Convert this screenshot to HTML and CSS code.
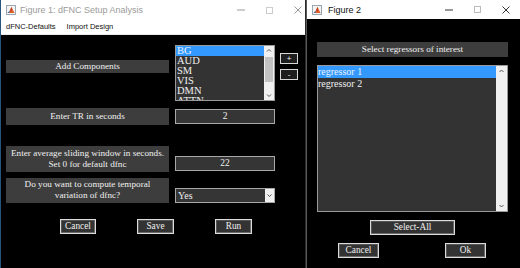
FILE: index.html
```html
<!DOCTYPE html>
<html>
<head>
<meta charset="utf-8">
<link rel="stylesheet" href="styles.css">
</head>
<body>
<div class="win fig1">
  <div class="titlebar">
    <svg class="appicon" width="10" height="10" viewBox="0 0 10 10"><rect x="0.5" y="0.5" width="9" height="9" fill="#f4f4f4" stroke="#9aa6b2"/><polygon points="1.5,8 4,5.5 5.5,1.8 7,5 8.6,8" fill="#e0602a"/><polygon points="4,5.5 5.5,1.8 5.8,6" fill="#b8321a"/><polygon points="1.5,8 4,5.5 3.4,8" fill="#3a78b8"/></svg>
    <span class="title inactive">Figure 1: dFNC Setup Analysis</span>
    <div class="controls c1">
      <svg width="8" height="8" viewBox="0 0 8 8"><line x1="0" y1="4" x2="8" y2="4" stroke="#999" stroke-width="1"/></svg>
      <svg width="7" height="7" viewBox="0 0 7 7"><rect x="0.5" y="0.5" width="6" height="6" fill="none" stroke="#ccc"/></svg>
      <svg width="8" height="8" viewBox="0 0 8 8"><path d="M0.5 0.5L7.5 7.5M7.5 0.5L0.5 7.5" stroke="#999" stroke-width="1"/></svg>
    </div>
  </div>
  <div class="menubar"><span class="menu">dFNC-Defaults</span><span class="menu">Import Design</span></div>
  <div class="content1">
    <div class="row r1">
      <div class="label l1">Add Components</div>
      <div class="listbox lb1">
        <div class="items">
          <div class="item sel">BG</div>
          <div class="item">AUD</div>
          <div class="item">SM</div>
          <div class="item">VIS</div>
          <div class="item">DMN</div>
          <div class="item">ATTN</div>
        </div>
        <div class="sbar sb1">
          <svg class="arr" width="10" height="9" viewBox="0 0 10 9"><polyline points="3,5.5 5,3.5 7,5.5" fill="none" stroke="#555" stroke-width="1"/></svg>
          <div class="track"><div class="thumb"></div></div>
          <svg class="arr" width="10" height="9" viewBox="0 0 10 9"><polyline points="3,3.5 5,5.5 7,3.5" fill="none" stroke="#555" stroke-width="1"/></svg>
        </div>
      </div>
      <div class="pm">
        <div class="smallbtn">+</div>
        <div class="smallbtn">-</div>
      </div>
    </div>
    <div class="row r2">
      <div class="label l2">Enter TR in seconds</div>
      <div class="field f2">2</div>
    </div>
    <div class="row r3">
      <div class="label l3">Enter average sliding window in seconds.<br>Set 0 for default dfnc</div>
      <div class="field f3">22</div>
    </div>
    <div class="row r4">
      <div class="label l4">Do you want to compute temporal<br>variation of dfnc?</div>
      <div class="popup">
        <span class="ptext">Yes</span>
        <span class="pbtn"><svg width="9" height="9" viewBox="0 0 9 9"><polyline points="2.5,3.5 4.5,5.5 6.5,3.5" fill="none" stroke="#555" stroke-width="1"/></svg></span>
      </div>
    </div>
    <div class="btnrow1">
      <div class="btn b-cancel1">Cancel</div>
      <div class="btn b-save">Save</div>
      <div class="btn b-run">Run</div>
    </div>
  </div>
</div>
<div class="win fig2">
  <div class="titlebar tb2">
    <svg class="appicon" width="10" height="10" viewBox="0 0 10 10"><rect x="0.5" y="0.5" width="9" height="9" fill="#f4f4f4" stroke="#9aa6b2"/><polygon points="1.5,8 4,5.5 5.5,1.8 7,5 8.6,8" fill="#e0602a"/><polygon points="4,5.5 5.5,1.8 5.8,6" fill="#b8321a"/><polygon points="1.5,8 4,5.5 3.4,8" fill="#3a78b8"/></svg>
    <span class="title">Figure 2</span>
    <div class="controls c2">
      <svg width="8" height="8" viewBox="0 0 8 8"><line x1="0" y1="4" x2="8" y2="4" stroke="#333" stroke-width="1"/></svg>
      <svg width="7" height="7" viewBox="0 0 7 7"><rect x="0.5" y="0.5" width="6" height="6" fill="none" stroke="#bbb"/></svg>
      <svg width="8" height="8" viewBox="0 0 8 8"><path d="M0.5 0.5L7.5 7.5M7.5 0.5L0.5 7.5" stroke="#333" stroke-width="1"/></svg>
    </div>
  </div>
  <div class="content2">
    <div class="label l5">Select regressors of interest</div>
    <div class="listbox lb2">
      <div class="items items2">
        <div class="item sel">regressor 1</div>
        <div class="item">regressor 2</div>
      </div>
      <div class="sbar sb2">
        <svg class="arr" width="11" height="10" viewBox="0 0 11 10"><polyline points="3.5,6 5.5,4 7.5,6" fill="none" stroke="#555" stroke-width="1"/></svg>
        <div class="track"></div>
        <svg class="arr" width="11" height="10" viewBox="0 0 11 10"><polyline points="3.5,4 5.5,6 7.5,4" fill="none" stroke="#555" stroke-width="1"/></svg>
      </div>
    </div>
    <div class="btn b-selall">Select-All</div>
    <div class="btnrow2">
      <div class="btn b-cancel2">Cancel</div>
      <div class="btn b-ok">Ok</div>
    </div>
  </div>
</div>
</body>
</html>
```

FILE: styles.css
```css
* { box-sizing: border-box; }
html, body { margin: 0; padding: 0; }
body {
  width: 520px;
  height: 268px;
  overflow: hidden;
  background: #000;
  display: flex;
  font-family: "Liberation Serif", "Times New Roman", serif;
  color: #eee;
}
.win { height: 268px; background: #000; display: flex; flex-direction: column; }
.fig1 { width: 306px; border-left: 1px solid #27557d; border-right: 1px solid #2a2a2a; }
.fig2 { width: 214px; border-left: 1px solid #5a5a5a; }

.titlebar {
  height: 20px;
  background: #fff;
  display: flex;
  align-items: center;
  font-family: "Liberation Sans", Arial, sans-serif;
  font-size: 9px;
  color: #111;
}
.tb2 { height: 19px; }
.appicon { margin-left: 5px; margin-right: 4px; flex: none; }
.tb2 .appicon { margin-left: 5px; margin-right: 6px; }
.title.inactive { color: #9a9a9a; }
.controls { margin-left: auto; display: flex; align-items: center; gap: 21px; }
.c1 { padding-right: 3px; }
.c2 { padding-right: 10px; }

.menubar {
  height: 15px;
  background: #fff;
  display: flex;
  align-items: center;
  padding-left: 5px;
  padding-bottom: 1px;
  font-family: "Liberation Sans", Arial, sans-serif;
  font-size: 7.5px;
  color: #111;
  gap: 11px;
  border-bottom: 1px solid #e8e8e8;
}

.content1 { padding-top: 10px; display: flex; flex-direction: column; }
.row { display: flex; align-items: flex-start; }
.label {
  background: #3d3d3d;
  color: #f0f0f0;
  font-size: 9.2px;
  text-align: center;
  display: flex;
  align-items: center;
  justify-content: center;
  line-height: 11px;
  white-space: nowrap;
}
.l1, .l2, .l3, .l4 { margin-left: 5px; width: 163px; }
.l1 { margin-top: 15px; height: 13px; }
.r2 { margin-top: 7px; }
.l2 { height: 17px; }
.r3 { margin-top: 21px; }
.l3 { height: 26px; }
.r4 { margin-top: 6px; }
.l4 { height: 25px; line-height: 10.5px; padding-bottom: 2px; }

.listbox { background: #333; border: 1px solid #9a9a9a; display: flex; overflow: hidden; }
.lb1 { margin-left: 6px; width: 100px; height: 56px; }
.items { flex: 1; overflow: hidden; }
.item { font-size: 10.5px; line-height: 10px; height: 10px; padding-left: 1px; color: #f0f0f0; white-space: nowrap; }
.item.sel { background: #3399ff; color: #eaf4ff; }
.items2 .item { font-size: 10px; line-height: 11.5px; height: 11.5px; padding-left: 0; }
.sbar { background: #f0f0f0; display: flex; flex-direction: column; flex: none; }
.sb1 { width: 10px; }
.sb2 { width: 11px; }
.arr { display: block; flex: none; }
.track { flex: 1; padding: 1px 1px; }
.thumb { height: 25px; background: #c2c2c2; margin-top: 1px; }

.pm { margin-left: 5px; margin-top: 8px; display: flex; flex-direction: column; gap: 5px; }
.smallbtn {
  width: 18px; height: 11px;
  background: #1e1e1e;
  border: 1px solid #d8d8d8;
  color: #fff;
  font-family: "Liberation Sans", Arial, sans-serif;
  font-size: 8px;
  line-height: 9px;
  text-align: center;
}

.field {
  margin-left: 6px;
  width: 100px;
  height: 15px;
  background: #353535;
  border: 1px solid #a8a8a8;
  color: #f0f0f0;
  font-size: 9.5px;
  line-height: 13px;
  text-align: center;
}
.f2 { margin-top: 1px; }
.f3 { margin-top: 10px; }

.popup {
  margin-left: 6px;
  margin-top: 10px;
  width: 100px;
  height: 15px;
  background: #353535;
  border: 1px solid #a8a8a8;
  display: flex;
  align-items: center;
}
.ptext { flex: 1; font-size: 10px; padding-left: 2px; color: #f0f0f0; }
.pbtn { width: 9px; height: 13px; background: #f0f0f0; display: flex; align-items: center; justify-content: center; }

.btn {
  background: #333;
  border: 1px solid #dcdcdc;
  box-shadow: inset -1px -1px 0 #6a6a6a, inset 1px 1px 0 #555;
  color: #f0f0f0;
  font-size: 9.3px;
  text-align: center;
  height: 15px;
  line-height: 13px;
}
.btnrow1 { display: flex; margin-top: 16px; padding-left: 59px; gap: 41px; }
.b-cancel1 { width: 36px; }
.b-save, .b-run { width: 37px; }

.content2 { padding-left: 10px; display: flex; flex-direction: column; }
.l5 { margin-top: 23px; width: 191px; height: 15px; }
.lb2 { margin-top: 8px; width: 191px; height: 147px; }
.b-selall { margin-top: 8px; margin-left: 53px; width: 85px; }
.btnrow2 { display: flex; margin-top: 8px; padding-left: 21px; gap: 66px; }
.b-cancel2, .b-ok { width: 41px; }
```
